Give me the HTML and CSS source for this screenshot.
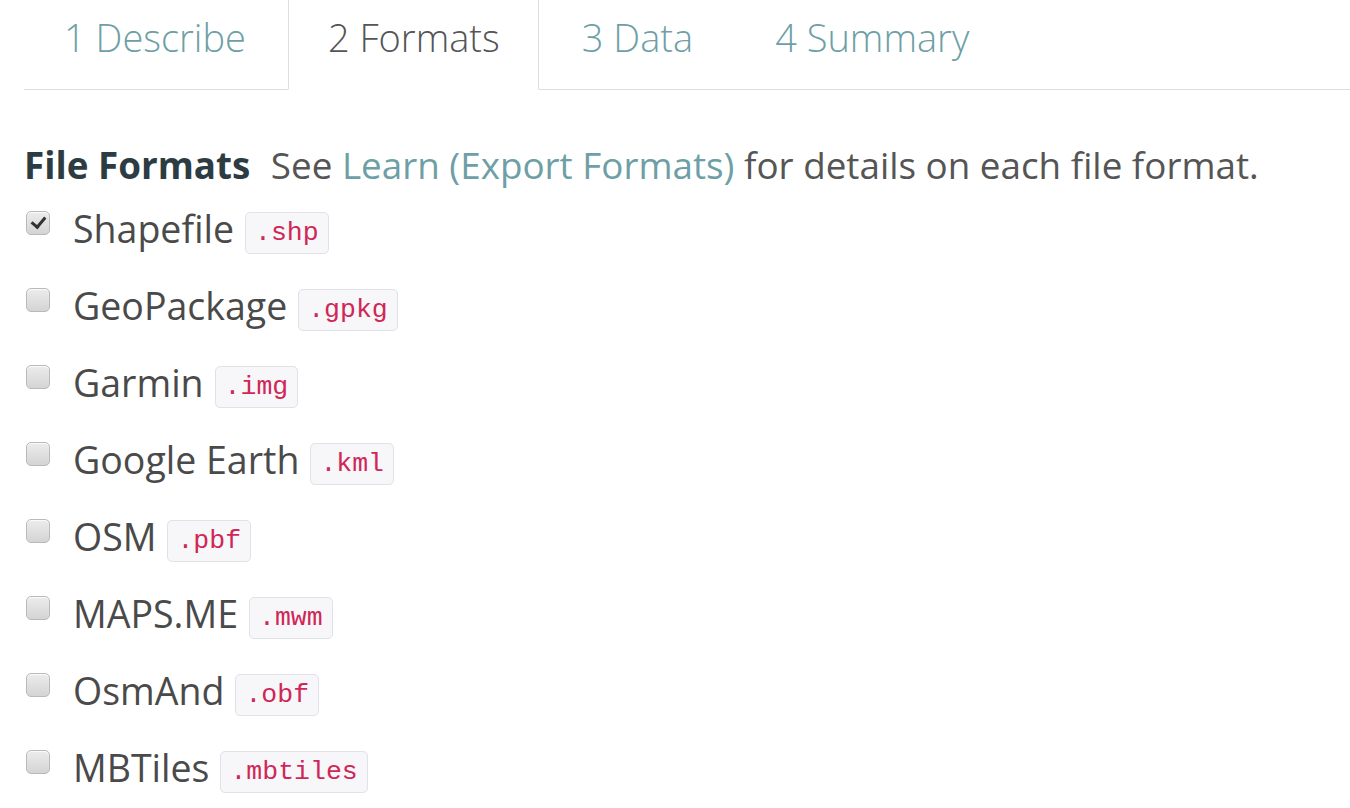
FILE: index.html
```html
<!DOCTYPE html>
<html>
<head>
<meta charset="utf-8">
<link rel="stylesheet" href="styles.css">
</head>
<body>
<div class="page">
  <ul class="tabs">
    <li class="tab"><a>1 Describe</a></li>
    <li class="tab active"><a>2 Formats</a></li>
    <li class="tab"><a>3 Data</a></li>
    <li class="tab"><a>4 Summary</a></li>
  </ul>
  <div class="content">
    <p class="heading"><strong>File Formats</strong> <span class="muted">See <a class="link">Learn (Export Formats)</a> for details on each file format.</span></p>
    <ul class="formats">
      <li><input type="checkbox" class="cb" checked><span class="name">Shapefile</span><code>.shp</code></li>
      <li><input type="checkbox" class="cb"><span class="name">GeoPackage</span><code>.gpkg</code></li>
      <li><input type="checkbox" class="cb"><span class="name">Garmin</span><code>.img</code></li>
      <li><input type="checkbox" class="cb"><span class="name">Google Earth</span><code>.kml</code></li>
      <li><input type="checkbox" class="cb"><span class="name">OSM</span><code>.pbf</code></li>
      <li><input type="checkbox" class="cb"><span class="name">MAPS.ME</span><code>.mwm</code></li>
      <li><input type="checkbox" class="cb"><span class="name">OsmAnd</span><code>.obf</code></li>
      <li><input type="checkbox" class="cb"><span class="name">MBTiles</span><code>.mbtiles</code></li>
    </ul>
  </div>
</div>
</body>
</html>
```
FILE: styles.css
```css
html, body {
  margin: 0;
  padding: 0;
  background: #fff;
}
body {
  font-family: "Open Sans", "Liberation Sans", sans-serif;
  color: #555;
  overflow: hidden;
}
.page {
  padding-left: 24px;
}
.tabs {
  list-style: none;
  margin: 0;
  padding: 0;
  display: flex;
  border-bottom: 1px solid #dedede;
  height: 89px;
}
.tab {
  margin-right: 3px;
  margin-bottom: -1px;
  border: 1px solid transparent;
  border-top: none;
  display: flex;
  align-items: flex-start;
}
.tab a {
  display: block;
  padding: 13px 38px 0 39px;
  font-size: 38px;
  font-weight: 300;
  color: #6e9fa6;
  line-height: 48px;
}
.tab.active {
  border-color: #dedede;
  border-bottom-color: #fff;
  background: #fff;
}
.tab.active a {
  color: #555;
}
.content {
  padding-top: 50px;
}
.heading {
  margin: 0;
  font-size: 36.8px;
  line-height: 50px;
  color: #555;
}
.heading strong {
  font-weight: 700;
  color: #2d3c42;
  margin-right: 11px;
}
.link {
  color: #6e9fa6;
}
.formats {
  list-style: none;
  margin: 0;
  padding: 0;
}
.formats li {
  display: flex;
  align-items: center;
  height: 77px;
}
.cb {
  appearance: none;
  -webkit-appearance: none;
  width: 24px;
  height: 24px;
  margin: 0 23px 0 2px;
  border: 1px solid #b9b9b9;
  border-radius: 5px;
  background: linear-gradient(#ececec, #d4d4d4);
  box-shadow: inset 0 1px 1px rgba(255,255,255,0.8);
  position: relative;
  top: -6px;
}
.cb:checked::after {
  content: "";
  position: absolute;
  left: 7px;
  top: 2px;
  width: 6px;
  height: 11px;
  border: solid #333;
  border-width: 0 3px 3px 0;
  transform: rotate(40deg);
}
.name {
  font-size: 37.5px;
  color: #4a4a4a;
  margin-right: 11px;
}
code {
  font-family: "Liberation Mono", "DejaVu Sans Mono", monospace;
  font-size: 26.5px;
  color: #cf2757;
  background: #f7f7f9;
  border: 1px solid #e1e1e8;
  border-radius: 5px;
  padding: 5px 9px;
  line-height: 30px;
  position: relative;
  top: 4px;
}
```
